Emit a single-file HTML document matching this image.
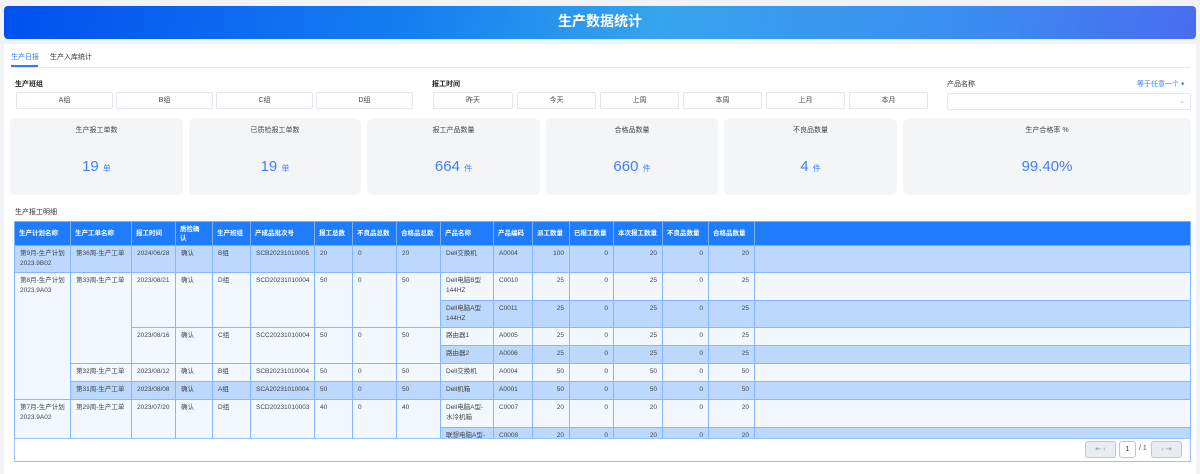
<!DOCTYPE html>
<html><head><meta charset="utf-8"><style>
*{box-sizing:border-box;margin:0;padding:0}
body{width:1200px;height:474px;overflow:hidden;background:#f2f3f7;font-family:"Liberation Sans","Noto Sans CJK SC",sans-serif;color:#333;position:relative}
.abs{position:absolute}
.banner{left:4px;top:6px;width:1192px;height:33px;border-radius:4px;background:linear-gradient(100deg,#0050ef 0%,#1680f0 35%,#36a4ee 55%,#3a8ef0 80%,#4a6cf0 100%);color:#fff;font-size:14px;font-weight:bold;text-align:center;line-height:31px}
.panel{left:4px;top:44px;width:1192px;height:430px;background:#fff}
.tab{font-size:7px;top:52px}
.btn{position:absolute;top:92px;height:17px;border:1px solid #e3e6ec;border-radius:2px;background:#fff;font-size:7px;text-align:center;line-height:15px;color:#444}
.lbl{font-size:7px;font-weight:bold;top:79px;color:#222}
.card{position:absolute;top:118px;height:77px;background:#f4f5f7;border-radius:6px;text-align:center}
.card .t{font-size:7px;color:#444;margin-top:7px}
.card .v{font-size:15px;color:#3e82f7;margin-top:23px}
.card .v small{font-size:8px}
table{border-collapse:collapse;table-layout:fixed;font-size:6.5px;color:#444}
td,th{border:1px solid #86b6fb;padding:3px 5px;vertical-align:top;text-align:left;overflow:hidden;line-height:10px}
th{background:#1f7dfd;color:#fff;font-weight:bold;height:24px;padding:1px 4px;vertical-align:middle;border-color:#7cb0fb;line-height:9px}
.h{background:#bcd8fd}.p{background:#f3f8ff}
.r{text-align:right}
.pg{position:absolute;top:441px;height:17px;border:1px solid #a9c9fb;border-radius:3px;background:#e9ecf1;font-size:7px;color:#999;text-align:center;line-height:15px}
</style></head><body>
<div class="abs banner">生产数据统计</div>
<div class="abs panel"></div>
<div class="abs tab" style="left:11px;color:#2f7cf6">生产日报</div>
<div class="abs" style="left:11px;top:65px;width:27px;height:2px;background:#2f7cf6"></div>
<div class="abs tab" style="left:50px;color:#333">生产入库统计</div>
<div class="abs" style="left:10px;top:67px;width:1180px;height:1px;background:#e6e9f0"></div>
<div class="abs lbl" style="left:15px">生产班组</div>
<div class="abs lbl" style="left:432px">报工时间</div>
<div class="abs" style="left:947px;top:79px;font-size:7px;color:#333">产品名称</div>
<div class="abs" style="left:1137px;top:79px;font-size:7px;color:#3e82f7">等于任意一个 ▾</div>
<div class="btn" style="left:16px;width:97px">A组</div>
<div class="btn" style="left:116px;width:97px">B组</div>
<div class="btn" style="left:216px;width:97px">C组</div>
<div class="btn" style="left:316px;width:97px">D组</div>
<div class="btn" style="left:433px;width:80px">昨天</div>
<div class="btn" style="left:517px;width:79px">今天</div>
<div class="btn" style="left:600px;width:79px">上周</div>
<div class="btn" style="left:683px;width:79px">本周</div>
<div class="btn" style="left:766px;width:79px">上月</div>
<div class="btn" style="left:849px;width:79px">本月</div>
<div class="btn" style="left:947px;width:244px;top:93px;text-align:right;padding-right:5px;color:#9ab">⌄</div>
<div class="card" style="left:10px;width:173px"><div class="t">生产报工单数</div><div class="v">19 <small>单</small></div></div>
<div class="card" style="left:189px;width:172px"><div class="t">已质检报工单数</div><div class="v">19 <small>单</small></div></div>
<div class="card" style="left:367px;width:173px"><div class="t">报工产品数量</div><div class="v">664 <small>件</small></div></div>
<div class="card" style="left:546px;width:172px"><div class="t">合格品数量</div><div class="v">660 <small>件</small></div></div>
<div class="card" style="left:724px;width:173px"><div class="t">不良品数量</div><div class="v">4 <small>件</small></div></div>
<div class="card" style="left:903px;width:288px"><div class="t">生产合格率 %</div><div class="v">99.40%</div></div>
<div class="abs" style="left:15px;top:207px;font-size:7px;color:#333">生产报工明细</div>
<div class="abs" style="left:14px;top:221px;width:1177px;height:241px;border:1px solid #9cc2fb;background:#fff"></div>
<div class="abs" style="left:14px;top:221px;width:1177px;height:217px;overflow:hidden">
<table style="width:1177px">
<colgroup><col style="width:56px"><col style="width:61px"><col style="width:44px"><col style="width:37px"><col style="width:38px"><col style="width:64px"><col style="width:38px"><col style="width:44px"><col style="width:44px"><col style="width:53px"><col style="width:39px"><col style="width:37px"><col style="width:44px"><col style="width:49px"><col style="width:46px"><col style="width:46px"><col></colgroup>
<tr style="height:24px"><th>生产计划名称</th><th>生产工单名称</th><th>报工时间</th><th style="padding-right:8px">质检确认</th><th>生产班组</th><th>产成品批次号</th><th>报工总数</th><th>不良品总数</th><th>合格品总数</th><th>产品名称</th><th>产品编码</th><th>派工数量</th><th>已报工数量</th><th style="white-space:nowrap">本次报工数量</th><th>不良品数量</th><th>合格品数量</th><th></th></tr>
<tr class="h" style="height:27px"><td>第9月-生产计划2023.9B02</td><td>第36周-生产工单</td><td>2024/06/28</td><td>确认</td><td>B组</td><td>SCB20231010005</td><td>20</td><td>0</td><td>20</td><td>Dell交换机</td><td>A0004</td><td class="r">100</td><td class="r">0</td><td class="r">20</td><td class="r">0</td><td class="r">20</td><td></td></tr>
<tr style="height:28px"><td class="p" rowspan="6">第8月-生产计划2023.9A03</td><td class="p" rowspan="4">第33周-生产工单</td><td class="p" rowspan="2">2023/08/21</td><td class="p" rowspan="2">确认</td><td class="p" rowspan="2">D组</td><td class="p" rowspan="2">SCD20231010004</td><td class="p" rowspan="2">50</td><td class="p" rowspan="2">0</td><td class="p" rowspan="2">50</td><td class="p">Dell电脑B型144HZ</td><td class="p">C0010</td><td class="p r">25</td><td class="p r">0</td><td class="p r">25</td><td class="p r">0</td><td class="p r">25</td><td class="p"></td></tr>
<tr class="h" style="height:27px"><td>Dell电脑A型144HZ</td><td>C0011</td><td class="r">25</td><td class="r">0</td><td class="r">25</td><td class="r">0</td><td class="r">25</td><td></td></tr>
<tr style="height:18px"><td class="p" rowspan="2">2023/08/16</td><td class="p" rowspan="2">确认</td><td class="p" rowspan="2">C组</td><td class="p" rowspan="2">SCC20231010004</td><td class="p" rowspan="2">50</td><td class="p" rowspan="2">0</td><td class="p" rowspan="2">50</td><td class="p">路由器1</td><td class="p">A0005</td><td class="p r">25</td><td class="p r">0</td><td class="p r">25</td><td class="p r">0</td><td class="p r">25</td><td class="p"></td></tr>
<tr class="h" style="height:18px"><td>路由器2</td><td>A0006</td><td class="r">25</td><td class="r">0</td><td class="r">25</td><td class="r">0</td><td class="r">25</td><td></td></tr>
<tr class="p" style="height:18px"><td>第32周-生产工单</td><td>2023/08/12</td><td>确认</td><td>B组</td><td>SCB20231010004</td><td>50</td><td>0</td><td>50</td><td>Dell交换机</td><td>A0004</td><td class="r">50</td><td class="r">0</td><td class="r">50</td><td class="r">0</td><td class="r">50</td><td></td></tr>
<tr class="h" style="height:18px"><td>第31周-生产工单</td><td>2023/08/08</td><td>确认</td><td>A组</td><td>SCA20231010004</td><td>50</td><td>0</td><td>50</td><td>Dell机箱</td><td>A0001</td><td class="r">50</td><td class="r">0</td><td class="r">50</td><td class="r">0</td><td class="r">50</td><td></td></tr>
<tr style="height:28px"><td class="p" rowspan="2">第7月-生产计划2023.9A02</td><td class="p" rowspan="2">第29周-生产工单</td><td class="p" rowspan="2">2023/07/20</td><td class="p" rowspan="2">确认</td><td class="p" rowspan="2">D组</td><td class="p" rowspan="2">SCD20231010003</td><td class="p" rowspan="2">40</td><td class="p" rowspan="2">0</td><td class="p" rowspan="2">40</td><td class="p">Dell电脑A型-水冷机箱</td><td class="p">C0007</td><td class="p r">20</td><td class="p r">0</td><td class="p r">20</td><td class="p r">0</td><td class="p r">20</td><td class="p"></td></tr>
<tr class="h" style="height:28px"><td>联想电脑A型-</td><td>C0008</td><td class="r">20</td><td class="r">0</td><td class="r">20</td><td class="r">0</td><td class="r">20</td><td></td></tr>
</table></div>
<div class="abs" style="left:14px;top:438px;width:1177px;height:1px;background:#9cc2fb"></div>
<div class="pg" style="left:1085px;width:31px">⇤ ‹</div>
<div class="pg" style="left:1119px;width:17px;background:#fff;color:#333">1</div>
<div class="abs" style="left:1139px;top:445px;font-size:7px;color:#555">/ 1</div>
<div class="pg" style="left:1151px;width:31px">› ⇥</div>
</body></html>
